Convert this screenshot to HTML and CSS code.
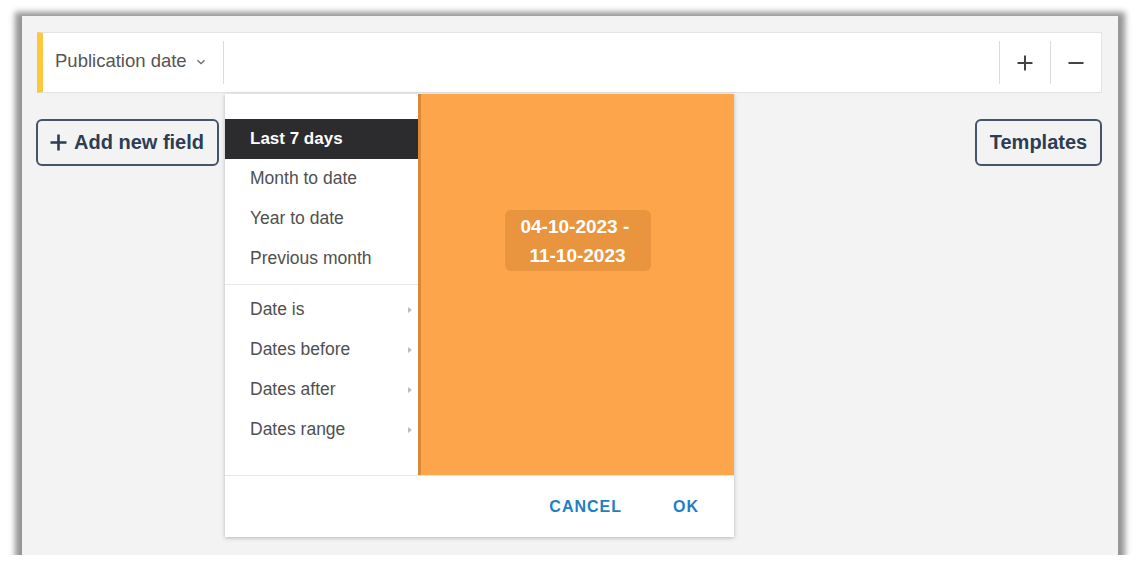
FILE: index.html
```html
<!DOCTYPE html>
<html>
<head>
<meta charset="utf-8">
<link rel="stylesheet" href="styles.css">
</head>
<body>
<div class="frame">
  <div class="filter-bar">
    <div class="field-label">Publication date
      <svg class="chev" width="10" height="6" viewBox="0 0 10 6"><path d="M1.5 1.2 L5 4.6 L8.5 1.2" fill="none" stroke="#666" stroke-width="1.3"/></svg>
    </div>
    <div class="field-value"></div>
    <div class="icon-cell"><svg width="18" height="18" viewBox="0 0 18 18"><path d="M9 1.5 V16.5 M1.5 9 H16.5" stroke="#444" stroke-width="2"/></svg></div>
    <div class="icon-cell"><svg width="18" height="18" viewBox="0 0 18 18"><path d="M1.5 9 H16.5" stroke="#444" stroke-width="2"/></svg></div>
  </div>
  <div class="actions">
    <button class="btn"><svg class="plus" width="17" height="17" viewBox="0 0 17 17"><path d="M8.5 0.5 V16.5 M0.5 8.5 H16.5" stroke="#2c3d54" stroke-width="2.6"/></svg>Add new field</button>
    <button class="btn">Templates</button>
  </div>

  <div class="dropdown">
    <div class="dd-body">
      <ul class="menu">
        <li class="item active">Last 7 days</li>
        <li class="item">Month to date</li>
        <li class="item">Year to date</li>
        <li class="item">Previous month</li>
        <li class="sep"></li>
        <li class="item sub">Date is</li>
        <li class="item sub">Dates before</li>
        <li class="item sub">Dates after</li>
        <li class="item sub">Dates range</li>
      </ul>
      <div class="preview">
        <div class="badge">04-10-2023 -&nbsp;<br>11-10-2023</div>
      </div>
    </div>
    <div class="dd-footer">
      <span class="link">CANCEL</span>
      <span class="link">OK</span>
    </div>
  </div>
</div>
</body>
</html>
```

FILE: styles.css
```css
* { box-sizing: border-box; }
html, body { margin: 0; padding: 0; background: #fff; }
body { font-family: "Liberation Sans", Arial, sans-serif; }

.frame {
  position: relative;
  margin: 16px 0 0 22px;
  width: 1096px;
  height: 539px;
  background: #f3f3f3;
  padding: 16px 16px 0 15px;
  box-shadow: 0 3px 6px 7px rgba(0,0,0,0.42);
}

.filter-bar {
  display: flex;
  align-items: center;
  height: 61px;
  background: #fff;
  border: 1px solid #e3e3e3;
  border-left: 6px solid #fcc83c;
}
.field-label {
  display: flex;
  align-items: center;
  gap: 9px;
  height: 43px;
  padding: 0 12px 3px 12px;
  font-size: 18.5px;
  color: #555;
  border-right: 1px solid #dcdcdc;
  width: 181px;
  white-space: nowrap;
}
.chev { margin-top: 1px; }
.field-value { flex: 1; }
.icon-cell {
  width: 51px;
  height: 43px;
  display: flex;
  align-items: center;
  justify-content: center;
  border-left: 1px solid #dcdcdc;
}

.actions {
  display: flex;
  justify-content: space-between;
  margin: 26px 0 0 -1px;
}
.btn {
  display: flex;
  align-items: center;
  gap: 7px;
  height: 47px;
  padding: 0 12px;
  background: transparent;
  border: 2px solid #44546b;
  border-radius: 6px;
  font-family: "Liberation Sans", Arial, sans-serif;
  font-weight: bold;
  font-size: 20px;
  color: #2c3d54;
  white-space: nowrap;
}
.actions .btn:first-child { width: 183px; }
.actions .btn:last-child { width: 127px; justify-content: center; }

.dropdown {
  position: absolute;
  left: 203px;
  top: 78px;
  width: 509px;
  height: 443px;
  background: #fff;
  box-shadow: 0 1px 4px rgba(0,0,0,0.25);
  display: flex;
  flex-direction: column;
}
.dd-body { display: flex; height: 381px; }
.menu {
  list-style: none;
  margin: 0;
  padding: 25px 0 0 0;
  width: 193px;
}
.item {
  position: relative;
  height: 40px;
  line-height: 39px;
  padding-left: 25px;
  font-size: 17.5px;
  color: #505050;
}
.item.active {
  background: #2c2c2e;
  color: #fff;
  font-weight: bold;
  font-size: 17px;
}
.sep { height: 1px; background: #e8e8e8; margin: 5px 0 5px 0; }
.item.sub::after {
  content: "";
  position: absolute;
  right: 6px;
  top: 17px;
  border-left: 4px solid #bdbdbd;
  border-top: 3.5px solid transparent;
  border-bottom: 3.5px solid transparent;
}
.preview {
  flex: 1;
  background: #fca54b;
  border-left: 3px solid #d88a3a;
  display: flex;
  justify-content: center;
  align-items: flex-start;
  padding-top: 116px;
}
.badge {
  width: 146px;
  height: 61px;
  border-radius: 6px;
  background: rgba(170, 90, 20, 0.22);
  color: #fff;
  font-weight: bold;
  font-size: 19px;
  line-height: 29px;
  text-align: center;
  padding-top: 2px;
}
.dd-footer {
  flex: 1;
  border-top: 1px solid #e6e6e6;
  display: flex;
  justify-content: flex-end;
  align-items: center;
  gap: 51px;
  padding: 0 35px 0 0;
}
.link {
  font-size: 16px;
  font-weight: bold;
  letter-spacing: 1px;
  color: #1f7fc3;
}
```
